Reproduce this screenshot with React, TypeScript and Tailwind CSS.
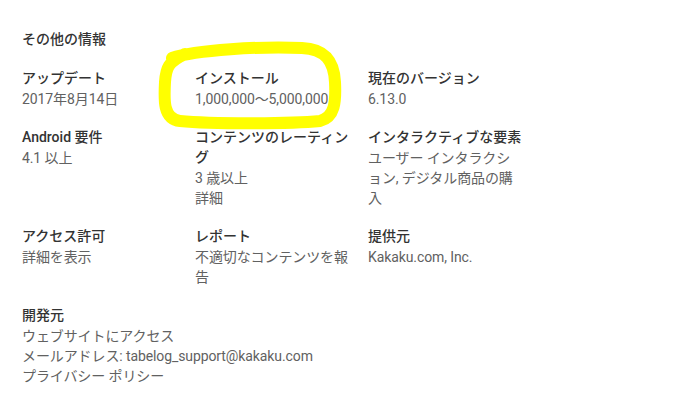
import React from 'react';

type Info = {
  label: string;
  lines: string[];
};

const items: Info[] = [
  { label: 'アップデート', lines: ['2017年8月14日'] },
  { label: 'インストール', lines: ['1,000,000～5,000,000'] },
  { label: '現在のバージョン', lines: ['6.13.0'] },
  { label: 'Android 要件', lines: ['4.1 以上'] },
  { label: 'コンテンツのレーティング', lines: ['3 歳以上', '詳細'] },
  { label: 'インタラクティブな要素', lines: ['ユーザー インタラクション, デジタル商品の購入'] },
  { label: 'アクセス許可', lines: ['詳細を表示'] },
  { label: 'レポート', lines: ['不適切なコンテンツを報告'] },
  { label: '提供元', lines: ['Kakaku.com, Inc.'] },
  {
    label: '開発元',
    lines: ['ウェブサイトにアクセス', 'メールアドレス: tabelog_support@kakaku.com', 'プライバシー ポリシー'],
  },
];

function MetaInfo({ item, wide }: { item: Info; wide?: boolean }) {
  return (
    <div className={wide ? 'col-span-3' : 'w-[155px]'}>
      <div className="text-[14px] leading-[20px] font-medium text-[#333]">{item.label}</div>
      <div className="mt-px text-[14px] leading-[20px] text-[#616161] tracking-[-0.1px]">
        {item.lines.map((l) => (
          <div key={l}>{l}</div>
        ))}
      </div>
    </div>
  );
}

export default function App() {
  return (
    <div
      className="relative w-[674px] h-[408px] bg-white pl-[22px] pt-[29px] overflow-hidden"
      style={{ fontFamily: 'Roboto, "Noto Sans CJK JP", sans-serif' }}
    >
      <h2 className="text-[14px] leading-[20px] font-medium text-[#333]">その他の情報</h2>
      <div className="mt-[19px] grid grid-cols-[155px_155px_155px] gap-x-[18px] gap-y-[18px]">
        {items.map((it, i) => (
          <MetaInfo key={it.label} item={it} wide={i === items.length - 1} />
        ))}
      </div>

      {/* marker scribble around the installs count */}
      <svg className="pointer-events-none absolute left-0 top-0" width="674" height="408">
        <path
          d="M172 58 C195 50 262 46 302 48 C326 49 334 62 335 82 C336 102 335 117 320 121 C290 124 210 124 180 121 C163 119 164 100 165 82 C166 68 168 62 185 54"
          fill="none"
          stroke="#ffff00"
          strokeWidth="12"
          strokeLinecap="round"
          strokeLinejoin="round"
        />
      </svg>
    </div>
  );
}
